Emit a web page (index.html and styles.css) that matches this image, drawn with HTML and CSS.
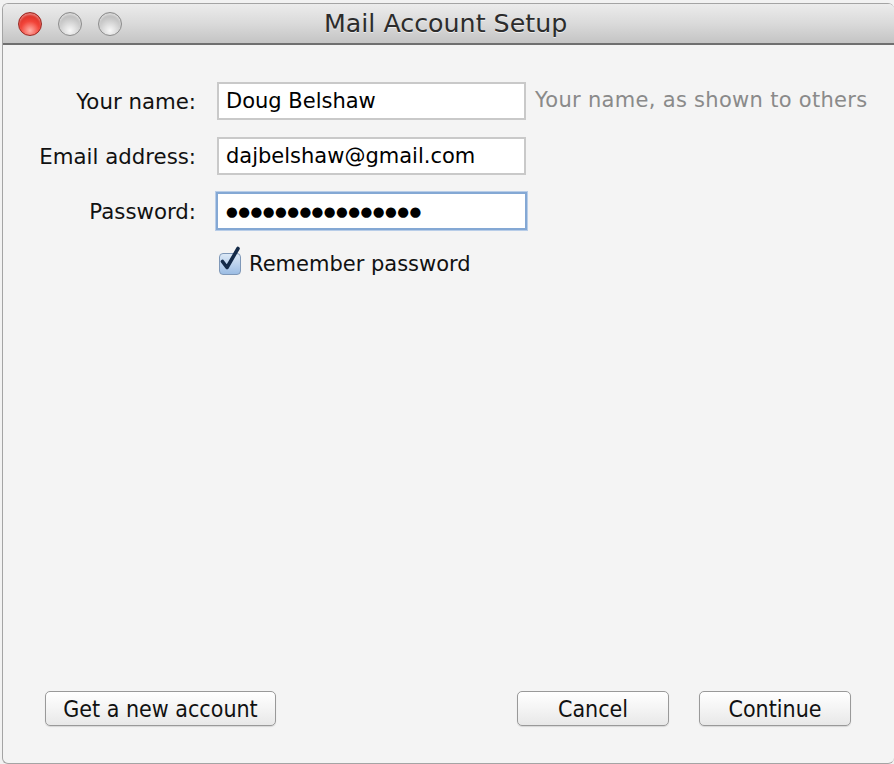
FILE: index.html
```html
<!DOCTYPE html>
<html>
<head>
<meta charset="utf-8">
<link rel="stylesheet" href="styles.css">
</head>
<body>
<div class="window">
  <div class="titlebar">
    <div class="lights">
      <span class="light red"></span>
      <span class="light gray"></span>
      <span class="light gray"></span>
    </div>
    <div class="title">Mail Account Setup</div>
  </div>
  <div class="content">
    <div class="form">
      <label class="label">Your name:</label>
      <div class="field">Doug Belshaw</div>
      <div class="hint">Your name, as shown to others</div>

      <label class="label">Email address:</label>
      <div class="field">dajbelshaw@gmail.com</div>
      <div></div>

      <label class="label">Password:</label>
      <div class="field focused"><span class="dots">&#9679;&#9679;&#9679;&#9679;&#9679;&#9679;&#9679;&#9679;&#9679;&#9679;&#9679;&#9679;&#9679;&#9679;&#9679;&#9679;</span></div>
      <div></div>

      <div></div>
      <div class="check-row">
        <span class="checkbox">
          <svg width="26" height="28" viewBox="0 0 26 28"><path d="M4.5 15.5 L9 21.5 L20 2.5" fill="none" stroke="#142a48" stroke-width="3.6" stroke-linecap="round" stroke-linejoin="round"/></svg>
        </span>
        <span class="check-label">Remember password</span>
      </div>
      <div></div>
    </div>
    <div class="spacer"></div>
    <div class="buttons">
      <button class="btn btn-wide">Get a new account</button>
      <div class="grow"></div>
      <button class="btn">Cancel</button>
      <button class="btn">Continue</button>
    </div>
  </div>
</div>
</body>
</html>
```
FILE: styles.css
```css
html, body {
  margin: 0;
  padding: 0;
  background: #f2f2f2;
  width: 894px;
  height: 764px;
  overflow: hidden;
}
body {
  font-family: "DejaVu Sans", "Noto Sans", sans-serif;
}
.window {
  margin: 3px 0 0 2px;
  width: 892px;
  height: 761px;
  box-sizing: border-box;
  border: 1px solid #a4a4a4;
  border-right: none;
  border-radius: 6px 6px 6px 6px;
  background: #f4f4f4;
  display: flex;
  flex-direction: column;
  overflow: hidden;
}
.titlebar {
  height: 39px;
  flex: none;
  background: linear-gradient(#ececec, #dadada 50%, #c4c4c4);
  border-bottom: 2px solid #6f6f6f;
  display: flex;
  align-items: center;
  position: relative;
}
.lights {
  display: flex;
  gap: 16px;
  padding-left: 15px;
}
.light {
  width: 24px;
  height: 24px;
  border-radius: 50%;
  box-sizing: border-box;
  display: block;
}
.light.red {
  background: radial-gradient(circle at 50% 80%, #ffb0a8 0%, #f2453a 45%, #c81c14 100%);
  border: 1px solid #9a2a24;
  box-shadow: inset 0 2px 2px rgba(255,255,255,0.4);
}
.light.gray {
  background: radial-gradient(circle at 50% 80%, #f8f8f8 0%, #d2d2d2 45%, #a6a6a6 100%);
  border: 1px solid #8c8c8c;
  box-shadow: inset 0 2px 2px rgba(255,255,255,0.5);
}
.title {
  position: absolute;
  left: 321px;
  top: 5px;
  font-size: 25.3px;
  color: #2c2c2c;
  text-shadow: 0 1px 0 rgba(255,255,255,0.6);
}
.content {
  flex: 1;
  display: flex;
  flex-direction: column;
  padding: 37px 0 37px 0;
}
.form {
  display: grid;
  grid-template-columns: 193px 309px 1fr;
  column-gap: 21px;
  row-gap: 17px;
  align-items: center;
}
.label {
  text-align: right;
  font-size: 21.3px;
  color: #111;
}
.field {
  height: 38px;
  box-sizing: border-box;
  border: 2px solid #c9c9c9;
  background: #fff;
  font-size: 21px;
  color: #000;
  padding-left: 7px;
  display: flex;
  align-items: center;
}
.field.focused {
  border: 2px solid #84a8d4;
  box-shadow: 0 0 0 1px #b8cde8;
  margin-left: -1px;
  width: 311px;
  padding-left: 8px;
}
.dots {
  font-size: 13.5px;
  letter-spacing: 0.45px;
}
.hint {
  font-size: 21px;
  letter-spacing: 0.3px;
  color: #8a8a8a;
  margin-left: -12px;
  white-space: nowrap;
  align-self: start;
  padding-top: 6px;
}
.check-row {
  display: flex;
  align-items: center;
  gap: 8px;
  margin-top: 5px;
  grid-column: 2 / 4;
}
.checkbox {
  width: 22px;
  height: 22px;
  margin-left: 2px;
  border: 1px solid #7f98b8;
  border-radius: 4px;
  background: linear-gradient(#dbe8f6, #9cbde4);
  box-sizing: border-box;
  position: relative;
}
.checkbox svg {
  position: absolute;
  left: -2px;
  top: -8px;
}
.check-label {
  font-size: 21px;
  color: #111;
}
.spacer { flex: 1; }
.buttons {
  display: flex;
  align-items: center;
  padding: 0 43px 0 42px;
  gap: 30px;
}
.grow { flex: 1; }
.btn {
  height: 35px;
  width: 152px;
  border: 1px solid #999;
  border-radius: 5px;
  background: linear-gradient(#ffffff, #f4f4f4 50%, #e8e8e8);
  box-shadow: 0 1px 1px rgba(0,0,0,0.12);
  font-family: "DejaVu Sans Condensed", "DejaVu Sans", sans-serif;
  font-size: 23px;
  color: #111;
  padding: 0;
}
.btn-wide { width: 231px; }
```
